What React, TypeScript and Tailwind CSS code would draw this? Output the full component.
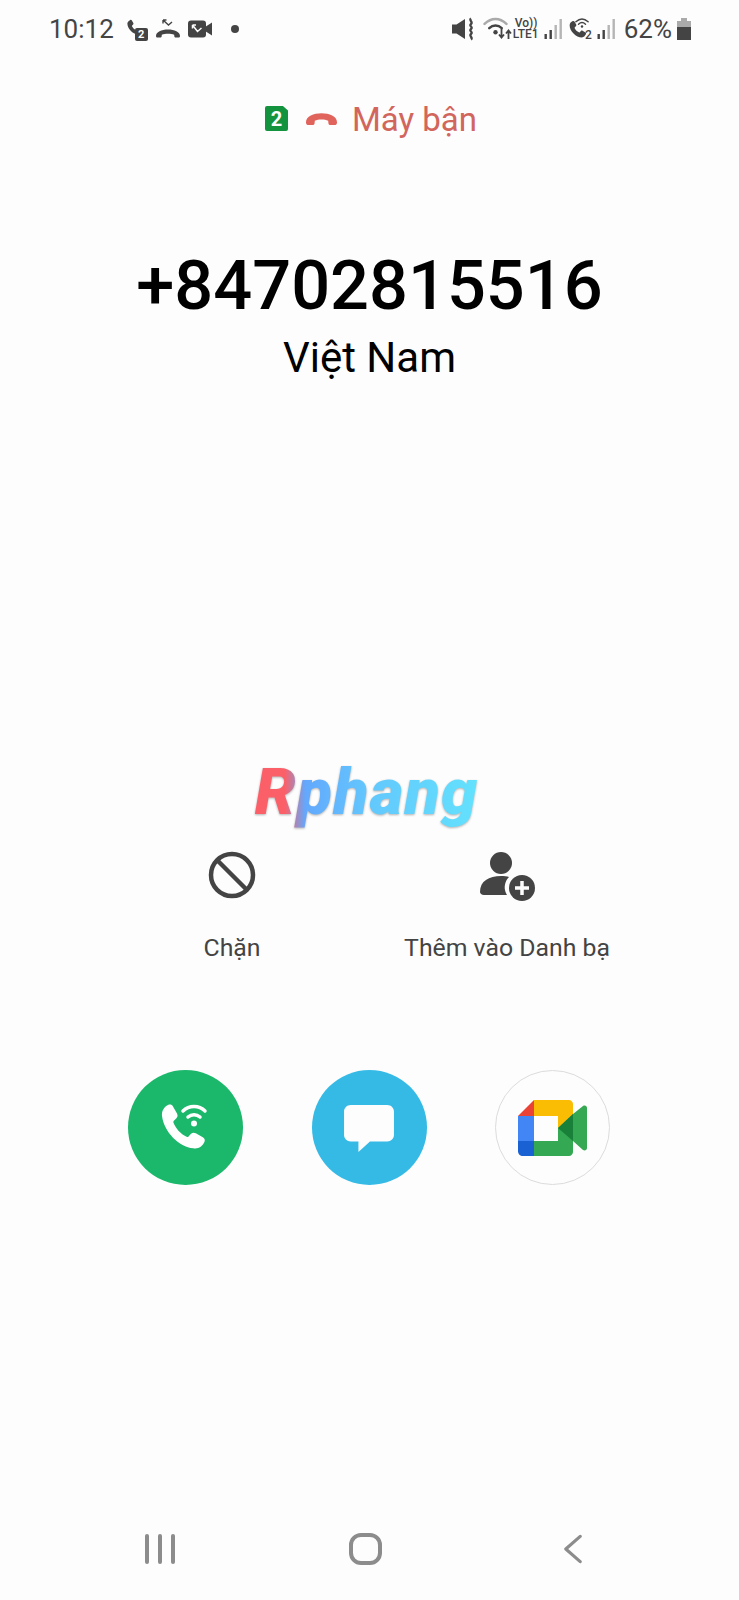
const roboto = "font-['Roboto',sans-serif]";

function PhoneGlyph({ className = "" }: { className?: string }) {
  return (
    <svg viewBox="0 0 24 24" className={className} fill="currentColor">
      <path d="M6.600 2.400c.7-.4 1.500-.2 1.900.5l2 3.300c.4.600.3 1.400-.2 1.900L9 9.400c-.3.300-.4.700-.2 1.100.9 1.900 2.800 3.800 4.700 4.700.4.200.8.100 1.100-.2l1.300-1.300c.5-.5 1.300-.6 1.900-.2l3.300 2c.7.400.9 1.200.5 1.900-.9 1.700-2.500 3.600-4.600 3.600C10.300 21 3 13.700 3 7c0-2.100 1.900-3.700 3.600-4.600z" />
    </svg>
  );
}

function HangupGlyph({ className = "" }: { className?: string }) {
  return (
    <svg viewBox="0 0 34 16" className={className} fill="currentColor">
      <path d="M1 11.500C1 5 9 2 17 2s16 3 16 9.500c0 1.700-1.100 2.800-2.700 2.800h-3.600c-1.500 0-2.500-.9-2.600-2.300l-.2-2.200C22 8.900 19.500 8.400 17 8.400s-5 .5-6.900 1.400L9.900 12c-.1 1.400-1.100 2.300-2.600 2.300H3.700C2.100 14.300 1 13.200 1 11.500z" />
    </svg>
  );
}

function SignalBars({ level }: { level: number }) {
  const bars = [5, 9, 14, 20];
  return (
    <svg viewBox="0 0 18 20" className="h-[20px] w-[18px]">
      {bars.map((h, i) => (
        <rect key={i} x={i * 5 + 0.5} y={20 - h} width="2.400" height={h} fill={i < level ? "#444" : "#b5b5b5"} />
      ))}
    </svg>
  );
}

function WifiGlyph({ className = "", dim = true }: { className?: string; dim?: boolean }) {
  return (
    <svg viewBox="0 0 24 18" className={className} fill="none" strokeLinecap="round">
      <path d="M1.500 7C8 .8 16 .8 22.500 7" stroke={dim ? "#aaa" : "#444"} strokeWidth="2.400" />
      <path d="M6 11c3.500-3.200 8.500-3.200 12 0" stroke="#444" strokeWidth="2.400" />
      <circle cx="12" cy="15" r="2.100" fill="#444" />
    </svg>
  );
}

function StatusBar() {
  return (
    <div className="flex h-[58px] shrink-0 items-center justify-between pl-[49px] pr-[48px] text-[#444]">
      <div className="flex items-center">
        <span className={`${roboto} text-[26px] leading-none`}>10:12</span>
        {/* sim 2 call */}
        <div className="relative ml-[11px] h-[23px] w-[23px]">
          <PhoneGlyph className="h-[19px] w-[19px]" />
          <span className={`${roboto} absolute bottom-0 right-0 flex h-[13px] w-[13px] items-center justify-center rounded-[2px] bg-[#444] text-[11px] font-bold leading-none text-white`}>
            2
          </span>
        </div>
        {/* missed call */}
        <svg viewBox="0 0 26 20" className="ml-[7px] h-[20px] w-[26px]" fill="none">
          <path d="M8 1l5.500 5 3.500-3M8 1v3.500M8 1h3.500" stroke="#444" strokeWidth="1.400" />
          <path d="M1 17c0-4 5.500-6.500 12-6.500S25 13 25 17c0 1-.7 1.600-1.600 1.600h-2.500c-.9 0-1.500-.5-1.600-1.400l-.1-1.500c-1.800-.7-3.800-1-6.200-1s-4.400.3-6.200 1l-.1 1.500c-.1.900-.7 1.400-1.600 1.400H2.600C1.700 18.600 1 18 1 17z" fill="#444" />
        </svg>
        {/* missed video */}
        <svg viewBox="0 0 24 18" className="ml-[7px] h-[18px] w-[24px]">
          <rect x="0" y="0.500" width="18" height="17" rx="3" fill="#444" />
          <path d="M17 7l7-4.500v13L17 11z" fill="#444" />
          <path d="M4.500 5l5 6.500 4-3.500M4.500 5v3.500M4.500 5H8" stroke="#fdfdfd" strokeWidth="1.500" fill="none" />
        </svg>
        <span className="ml-[19px] h-[8px] w-[8px] rounded-full bg-[#444]" />
      </div>
      <div className="flex items-center">
        {/* mute vibrate */}
        <svg viewBox="0 0 23 24" className="h-[24px] w-[23px]" fill="#444">
          <path d="M0 7.500h4.500L13 2v20l-8.500-5.500H0z" />
          <path d="M19 1.500c-2.500 2 2.500 3.500 0 5.500s2.500 3 0 5 2.500 3 0 5 2.500 3.500 0 5.500" fill="none" stroke="#444" strokeWidth="2.300" />
        </svg>
        <div className="relative ml-[8px] h-[26px] w-[29px]">
          <WifiGlyph className="h-[20px] w-[25px]" />
          <svg viewBox="0 0 14 10" className="absolute bottom-[3px] right-0 h-[10px] w-[14px]" fill="none" stroke="#444" strokeWidth="1.800">
            <path d="M3.500 0v8M1 5.500l2.500 3 2.500-3M10.500 10V2M8 4.500l2.500-3 2.500 3" />
          </svg>
        </div>
        <div className={`${roboto} ml-[1px] flex w-[27px] flex-col items-start text-[12px] font-medium leading-[11px]`}>
          <span className="pl-[2px]">Vo))</span>
          <span>LTE1</span>
        </div>
        <div className="ml-[4px]">
          <SignalBars level={2} />
        </div>
        <div className="relative ml-[5px] h-[24px] w-[25px]">
          <PhoneGlyph className="absolute bottom-[1px] left-0 h-[21px] w-[21px]" />
          <WifiGlyph className="absolute right-[3px] top-0 h-[12px] w-[14px]" dim={false} />
          <span className={`${roboto} absolute bottom-0 right-0 text-[12px] font-medium leading-none`}>2</span>
        </div>
        <div className="ml-[5px]">
          <SignalBars level={2} />
        </div>
        <span className={`${roboto} ml-[9px] text-[26px] leading-none`}>62%</span>
        <svg viewBox="0 0 14 22" className="ml-[5px] h-[22px] w-[14px]">
          <rect x="4" y="0" width="6" height="3" fill="#aaa" />
          <rect x="0" y="3" width="14" height="6" fill="#aaa" />
          <rect x="0" y="9" width="14" height="13" fill="#444" />
        </svg>
      </div>
    </div>
  );
}

function CallResult() {
  return (
    <div className="mt-[41px] flex h-[40px] items-center pl-[265px]">
      <span className={`${roboto} mt-[-1px] flex h-[25px] w-[23px] items-center justify-center rounded-[2px] bg-[#14933f] text-[20px] font-bold leading-none text-white [clip-path:polygon(0_0,78%_0,100%_18%,100%_100%,0_100%)]`}>
        2
      </span>
      <HangupGlyph className="ml-[17px] h-[16px] w-[33px] text-[#e0645c]" />
      <span className={`${roboto} ml-[14px] text-[33px] leading-none text-[#d2655c]`}>Máy bận</span>
    </div>
  );
}

function Caller() {
  return (
    <div className={`${roboto} mt-[106px] flex flex-col items-center text-black`}>
      <h1 className="text-[68.500px] font-medium leading-[82px]">+84702815516</h1>
      <p className="mt-[6px] text-[42px] leading-[50px]">Việt Nam</p>
    </div>
  );
}

function Watermark() {
  return (
    <div className="mt-[383px] flex h-[66px] justify-center">
      <span className="bg-[linear-gradient(90deg,#fb6069_0%,#fb6069_13%,#63a8fd_22%,#63c8fd_50%,#63e3fd_100%)] bg-clip-text pb-[14px] pr-[6px] font-['Roboto',sans-serif] text-[65px] font-black italic leading-[52px] tracking-[1px] text-transparent [filter:drop-shadow(0_1px_1px_rgba(0,0,0,0.3))]">
        Rphang
      </span>
    </div>
  );
}

function Actions() {
  return (
    <div className={`${roboto} mt-[19px] flex pl-[132px] text-[24.800px] leading-[30px] text-[#444]`}>
      <div className="flex w-[200px] flex-col items-center">
        <svg viewBox="0 0 48 48" className="h-[48px] w-[48px]" fill="none" stroke="#444" strokeWidth="4.500">
          <circle cx="24" cy="24" r="21" />
          <path d="M9.500 9.500l29 29" />
        </svg>
        <span className="mt-[34px]">Chặn</span>
      </div>
      <div className="ml-[25px] flex w-[300px] flex-col items-center">
        <svg viewBox="0 0 56 50" className="h-[50px] w-[56px]" fill="#444">
          <circle cx="22" cy="12" r="11" />
          <path d="M1 41c0-11 9-16 21-16 3 0 6 .3 8 1-3 3-5 8-4 13 .3 2 1 3 2 5H5c-2.500 0-4-1.500-4-3z" />
          <circle cx="43" cy="37" r="13" />
          <path d="M43 30v14M36 37h14" stroke="#fdfdfd" strokeWidth="3.500" />
        </svg>
        <span className="mt-[32px]">Thêm vào Danh bạ</span>
      </div>
    </div>
  );
}

function ContactButtons() {
  return (
    <div className="mt-[107px] flex gap-[68.500px] pl-[128px]">
      <div className="flex h-[115px] w-[115px] items-center justify-center rounded-full bg-[#1bb76b] text-white">
        <svg viewBox="0 0 54 54" className="h-[54px] w-[54px]">
          <path fill="#fff" d="M9 4c2-1 4-.5 5 1.500l4 7c1 2 .7 3.500-.8 5l-2.300 2.300c-.6.600-.7 1.200-.4 2 2.500 6 7 11 13 14 .8.300 1.500.2 2-.4l2.300-2.300c1.500-1.500 3-1.800 5-.8l7 4c2 1 2.500 3 1.500 5-2 4-6 7-11 6C20 46 5 31 3 15 2.500 10 5 6 9 4z" />
          <path d="M24 10c6-6 16-6 22 0M29 16c3.500-3 8.500-3 12 0" stroke="#fff" strokeWidth="3.500" fill="none" strokeLinecap="round" />
          <circle cx="35" cy="22.500" r="3" fill="#fff" />
        </svg>
      </div>
      <div className="flex h-[115px] w-[115px] items-center justify-center rounded-full bg-[#35bae6]">
        <svg viewBox="0 0 52 50" className="mt-[3px] h-[48px] w-[50px]" fill="#fdfdfd">
          <path d="M7 0h38c4 0 7 3 7 7v24c0 4-3 7-7 7H27L15 49V38H7c-4 0-7-3-7-7V7c0-4 3-7 7-7z" />
        </svg>
      </div>
      <div className="flex h-[115px] w-[115px] items-center justify-center rounded-full border-[1.500px] border-[#dcdcdc]">
        <svg viewBox="0 0 69 56" className="h-[56px] w-[69px]">
          <path d="M16 0L0 16h16z" fill="#ea4335" />
          <path d="M0 16h16v25H0z" fill="#4285f4" />
          <path d="M0 41h16v15H5c-3 0-5-2-5-5z" fill="#1a62d3" />
          <path d="M16 41h24V28l15-13v37c0 2-2 4-4 4H16z" fill="#34a853" />
          <path d="M16 0h35c2 0 4 2 4 4v11L40 28V16H16z" fill="#fbbc04" />
          <path d="M40 28l15-14 10-8c2-1 4 0 4 2v40c0 2-2 3-4 2l-10-9z" fill="#34a853" />
          <path d="M40 28l15-14v27z" fill="#188038" />
        </svg>
      </div>
    </div>
  );
}

function NavBar() {
  return (
    <div className="mt-auto mb-[34px] flex h-[34px] items-center pl-[145px]">
      <div className="flex h-[30px] gap-[9.500px]">
        <span className="w-[3.500px] rounded-full bg-[#8c8c8c]" />
        <span className="w-[3.500px] rounded-full bg-[#8c8c8c]" />
        <span className="w-[3.500px] rounded-full bg-[#8c8c8c]" />
      </div>
      <span className="ml-[174px] h-[32px] w-[33px] rounded-[12px] border-[4px] border-[#8c8c8c]" />
      <svg viewBox="0 0 20 32" className="ml-[182px] h-[32px] w-[18px]" fill="none" stroke="#8c8c8c" strokeWidth="3.500" strokeLinecap="round" strokeLinejoin="round">
        <path d="M18 2L2 16l16 14" />
      </svg>
    </div>
  );
}

export default function App() {
  return (
    <main className="flex h-[1600px] w-[739px] flex-col overflow-hidden bg-[#fdfdfd]">
      <StatusBar />
      <CallResult />
      <Caller />
      <Watermark />
      <Actions />
      <ContactButtons />
      <NavBar />
    </main>
  );
}
